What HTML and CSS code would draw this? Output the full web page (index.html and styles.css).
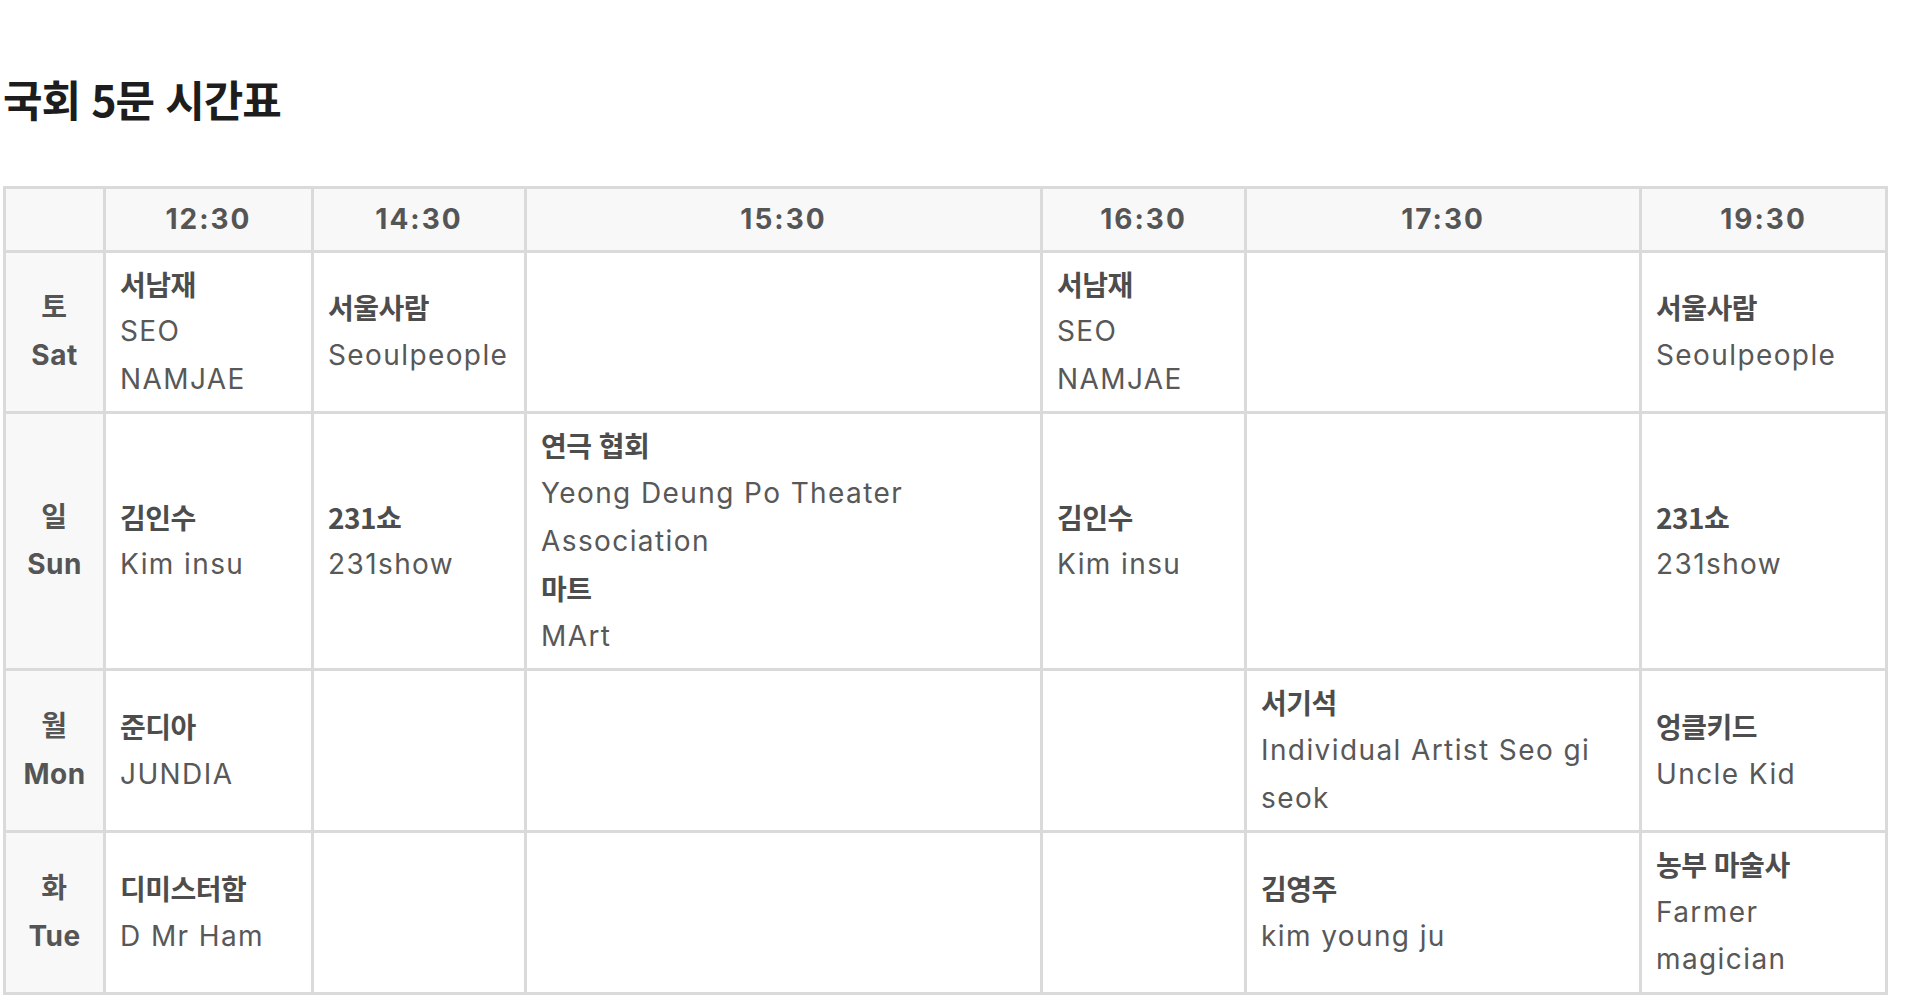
FILE: index.html
```html
<!DOCTYPE html>
<html lang="ko">
<head>
<meta charset="utf-8">
<title>국회 5문 시간표</title>
<link rel="stylesheet" href="styles.css">
</head>
<body>
<h1 class="title">국회 5문 시간표</h1>
<table class="timetable">
  <colgroup>
    <col class="col-day">
    <col class="col-a">
    <col class="col-b">
    <col class="col-c">
    <col class="col-d">
    <col class="col-e">
    <col class="col-f">
  </colgroup>
  <thead>
    <tr>
      <th class="corner"></th>
      <th>12:30</th>
      <th>14:30</th>
      <th>15:30</th>
      <th>16:30</th>
      <th>17:30</th>
      <th>19:30</th>
    </tr>
  </thead>
  <tbody>
    <tr>
      <th class="day">토<br>Sat</th>
      <td><div class="ko">서남재</div><div class="en">SEO NAMJAE</div></td>
      <td><div class="ko">서울사람</div><div class="en">Seoulpeople</div></td>
      <td></td>
      <td><div class="ko">서남재</div><div class="en">SEO NAMJAE</div></td>
      <td></td>
      <td><div class="ko">서울사람</div><div class="en">Seoulpeople</div></td>
    </tr>
    <tr>
      <th class="day">일<br>Sun</th>
      <td><div class="ko">김인수</div><div class="en">Kim insu</div></td>
      <td><div class="ko">231쇼</div><div class="en">231show</div></td>
      <td><div class="ko">연극 협회</div><div class="en">Yeong Deung Po Theater Association</div><div class="ko">마트</div><div class="en">MArt</div></td>
      <td><div class="ko">김인수</div><div class="en">Kim insu</div></td>
      <td></td>
      <td><div class="ko">231쇼</div><div class="en">231show</div></td>
    </tr>
    <tr>
      <th class="day">월<br>Mon</th>
      <td><div class="ko">준디아</div><div class="en">JUNDIA</div></td>
      <td></td>
      <td></td>
      <td></td>
      <td><div class="ko">서기석</div><div class="en">Individual Artist Seo gi seok</div></td>
      <td><div class="ko">엉클키드</div><div class="en">Uncle Kid</div></td>
    </tr>
    <tr>
      <th class="day">화<br>Tue</th>
      <td><div class="ko">디미스터함</div><div class="en">D Mr Ham</div></td>
      <td></td>
      <td></td>
      <td></td>
      <td><div class="ko">김영주</div><div class="en">kim young ju</div></td>
      <td><div class="ko">농부 마술사</div><div class="en">Farmer magician</div></td>
    </tr>
  </tbody>
</table>
</body>
</html>
```

FILE: styles.css
```css
html, body {
  margin: 0;
  padding: 0;
  background: #ffffff;
}

body {
  padding: 0 0 0 3px;
  font-family: Inter, "Noto Sans CJK KR", sans-serif;
  color: #555555;
}

.title {
  margin: 73px 0 63px 0;
  font-family: "Noto Sans CJK KR", sans-serif;
  font-size: 43px;
  line-height: 50px;
  font-weight: 700;
  letter-spacing: -1px;
  color: #1d1d1d;
}

.timetable {
  border-collapse: collapse;
  table-layout: fixed;
  width: 1885px;
  font-size: 28px;
  line-height: 47.6px;
}

.col-day { width: 100px; }
.col-a { width: 208px; }
.col-b { width: 213px; }
.col-c { width: 516px; }
.col-d { width: 204px; }
.col-e { width: 395px; }
.col-f { width: 246px; }

.timetable th,
.timetable td {
  border: 3px solid #dadada;
  padding: 8px 14px 8px 14px;
  vertical-align: middle;
}

.timetable thead th {
  background: #f8f8f8;
  font-weight: 700;
  text-align: center;
  color: #555555;
  padding-top: 7px;
  padding-bottom: 6px;
  letter-spacing: 2px;
}

.timetable .day {
  background: #f8f8f8;
  font-weight: 700;
  text-align: center;
  color: #555555;
  padding-left: 4px;
  padding-right: 4px;
  letter-spacing: 0.5px;
}

.timetable td {
  text-align: left;
}

.ko {
  font-family: "Noto Sans CJK KR", Inter, sans-serif;
  font-weight: 700;
  letter-spacing: -0.5px;
  color: #4d4d4d;
}

.en {
  font-weight: 400;
  letter-spacing: 1.4px;
  color: #585858;
}
```
